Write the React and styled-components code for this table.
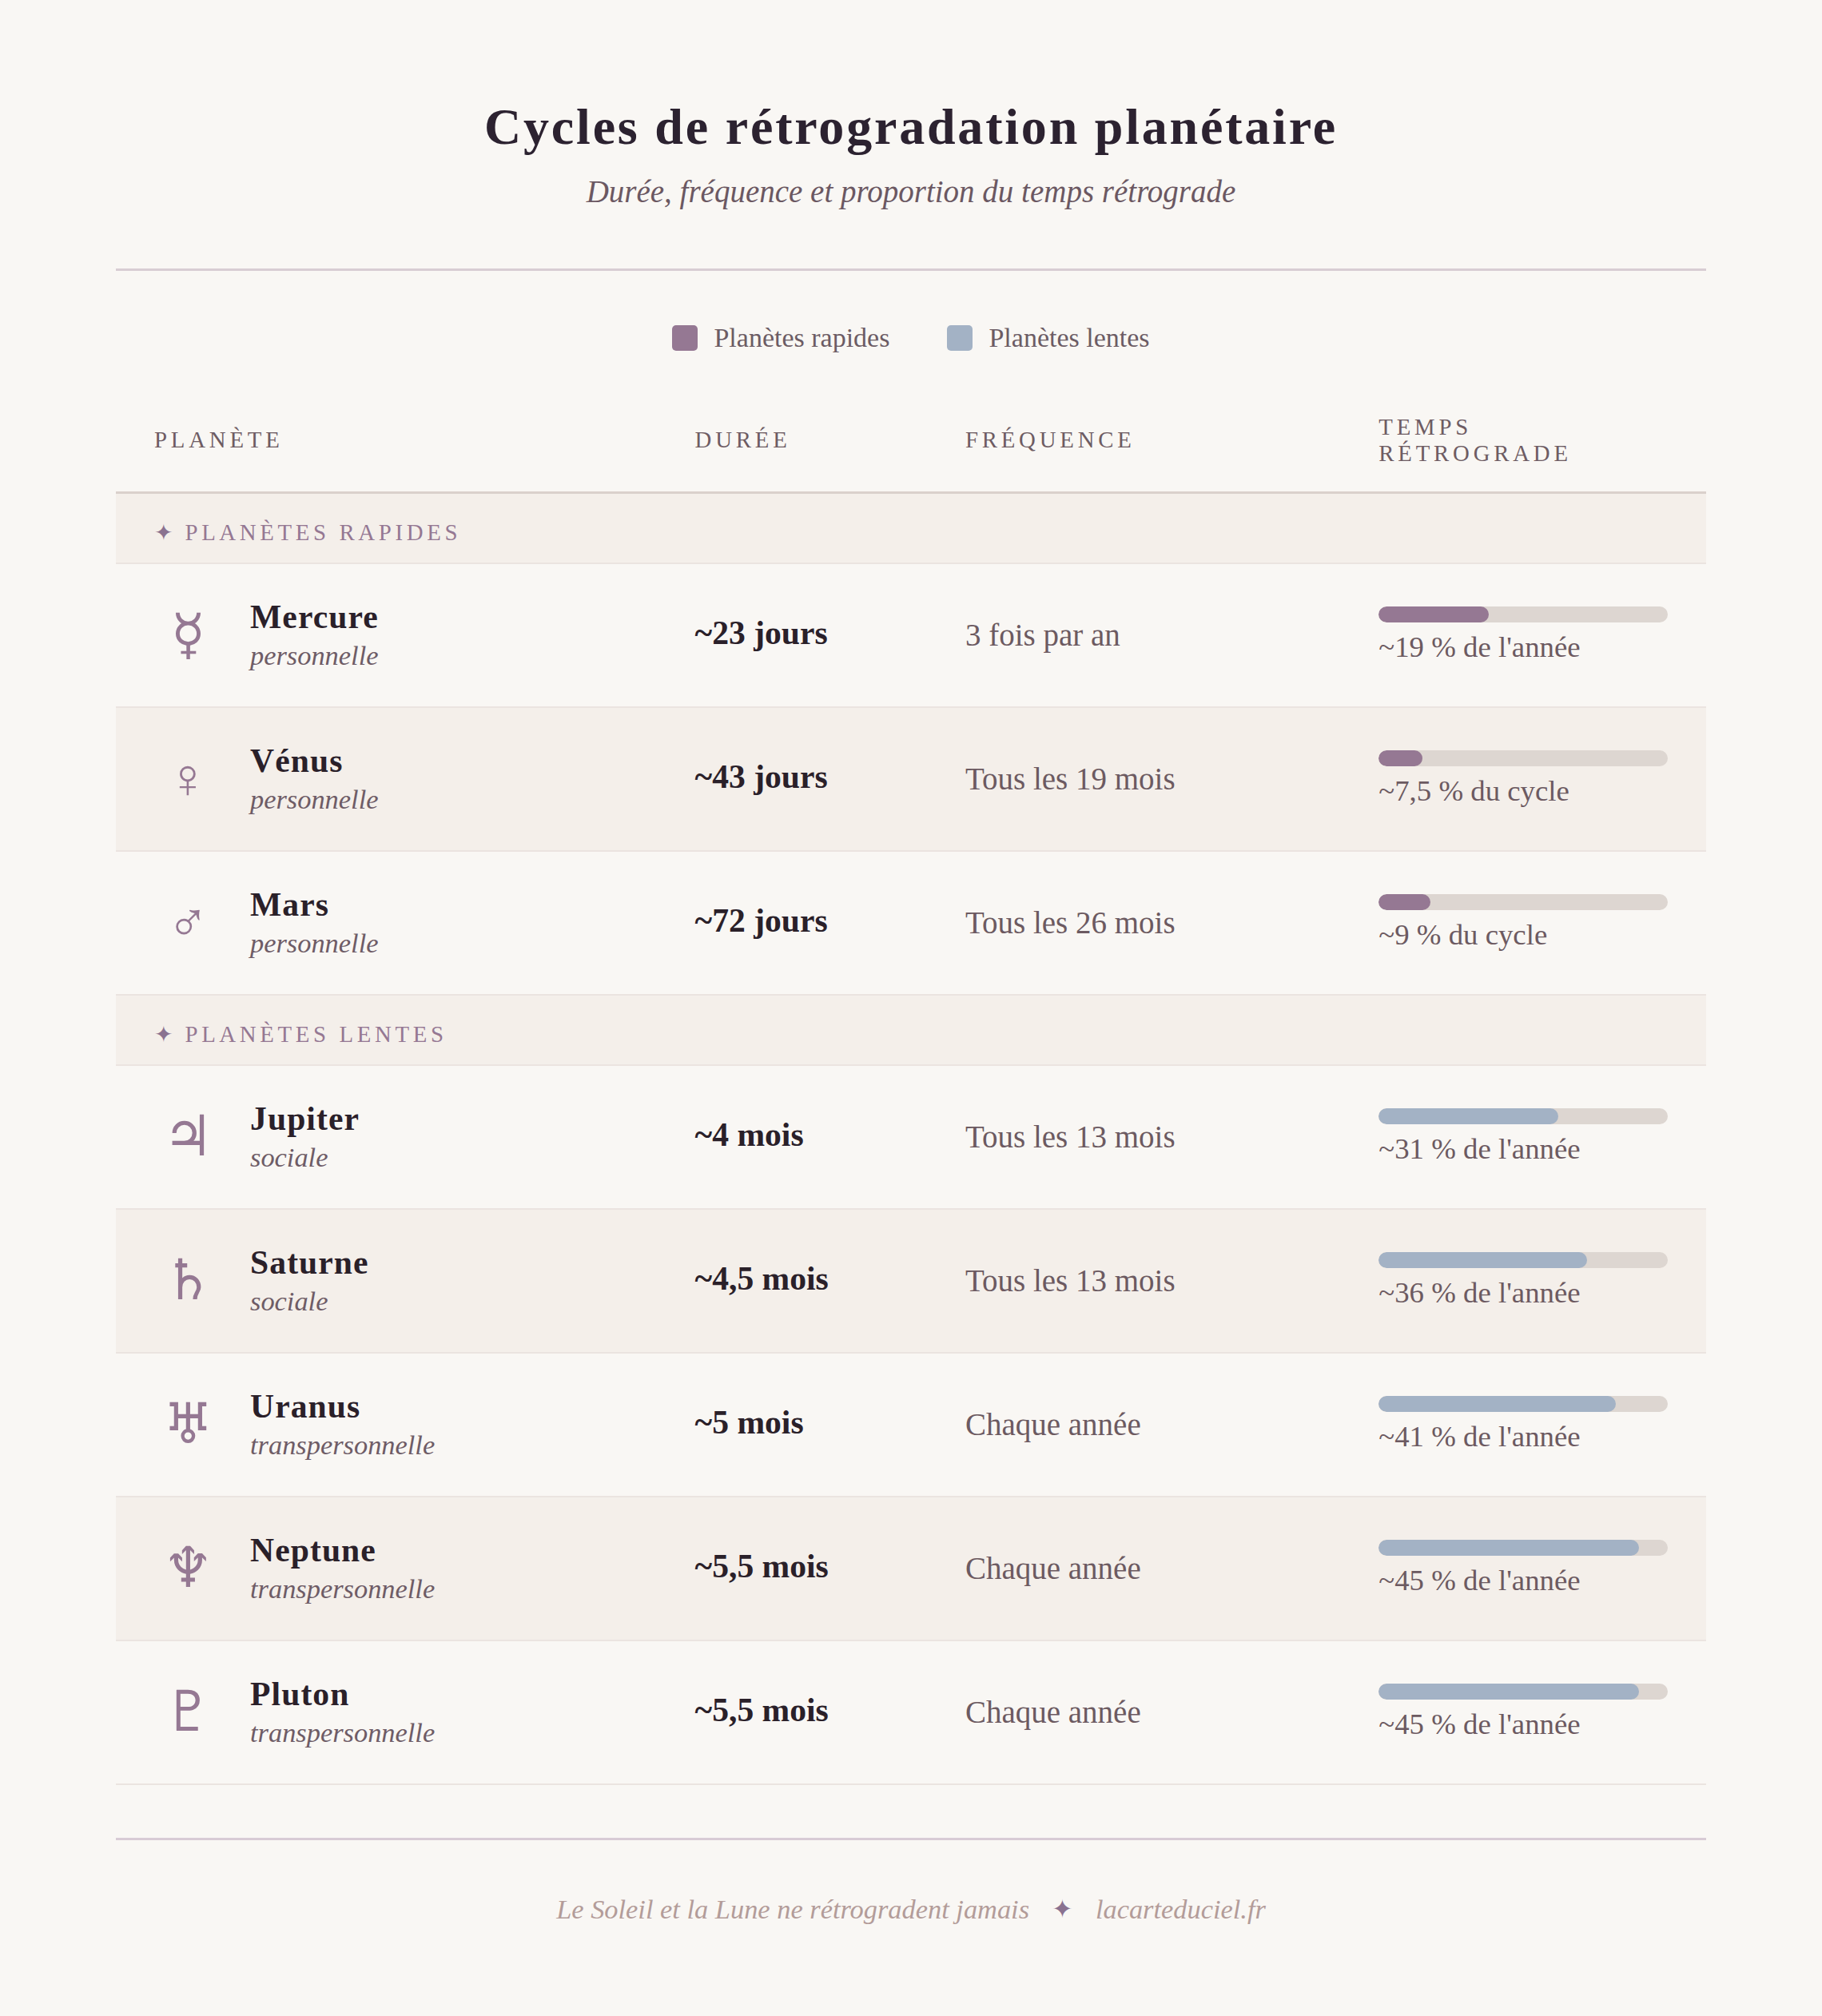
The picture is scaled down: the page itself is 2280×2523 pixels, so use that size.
import React from "react";
import styled, { createGlobalStyle } from "styled-components";

const GlobalStyle = createGlobalStyle`
  html, body {
    margin: 0;
    padding: 0;
    background: #f9f7f4;
  }
  body {
    font-family: "Liberation Serif", "Times New Roman", serif;
    color: #2c2230;
  }
`;

const Page = styled.div`
  max-width: 1990px;
  margin: 0 auto;
  padding: 122px 0 110px;
`;

const Header = styled.header`
  text-align: center;
  padding-bottom: 74px;
  border-bottom: 3px solid #d8cdd3;
`;

const Title = styled.h1`
  margin: 0;
  font-size: 64px;
  line-height: 1.15;
  font-weight: 700;
  letter-spacing: 2.8px;
  color: #2c2230;
`;

const Subtitle = styled.p`
  margin: 22px 0 0;
  font-size: 39px;
  line-height: 1.15;
  font-style: italic;
  color: #6b5862;
`;

const Legend = styled.div`
  display: flex;
  justify-content: center;
  align-items: center;
  gap: 72px;
  margin: 64px 0 42px;
`;

const LegendItem = styled.div`
  display: flex;
  align-items: center;
  gap: 20px;
  font-size: 34px;
  line-height: 1.15;
  color: #6c5c64;
`;

const Swatch = styled.span`
  width: 32px;
  height: 32px;
  border-radius: 5px;
  background: ${({ $color }) => $color};
`;

const cols = "34% 17% 26% 23%";

const HeadRow = styled.div`
  display: grid;
  grid-template-columns: ${cols};
  align-items: center;
  padding: 33px 0 31px;
  border-bottom: 3px solid #dad1cc;
`;

const HeadCell = styled.div`
  padding: 0 48px;
  font-size: 28.8px;
  line-height: 1.15;
  letter-spacing: 4.8px;
  text-transform: uppercase;
  color: #6e5c63;
`;

const SectionRow = styled.div`
  display: flex;
  align-items: center;
  gap: 15px;
  min-height: 88px;
  box-sizing: border-box;
  padding: 12px 48px 0;
  background: #f4efea;
  border-bottom: 2px solid #ebe4e0;
  font-size: 28.8px;
  letter-spacing: 4.65px;
  text-transform: uppercase;
  color: #957893;
`;

const Star = styled.span`
  font-family: "DejaVu Sans", sans-serif;
  font-size: ${({ $size }) => $size || 28}px;
  letter-spacing: 0;
  font-style: normal;
  color: #8a7290;
`;

const Row = styled.div`
  display: grid;
  grid-template-columns: ${cols};
  align-items: center;
  min-height: 178px;
  background: ${({ $alt }) => ($alt ? "#f4efea" : "#f9f7f4")};
  border-bottom: 2px solid #ebe4e0;
`;

const Cell = styled.div`
  padding: 0 48px;
`;

const PlanetCell = styled(Cell)`
  display: flex;
  align-items: center;
`;

const Symbol = styled.span`
  width: 84px;
  margin-right: 36px;
  flex-shrink: 0;
  text-align: center;
  font-size: 70px;
  line-height: 1;
  color: #957893;
`;

const Name = styled.div`
  font-size: 41.6px;
  line-height: 1.15;
  font-weight: 700;
  letter-spacing: 1.1px;
  color: #2a2029;
`;

const Kind = styled.div`
  margin-top: 5px;
  font-size: 34.4px;
  line-height: 1.15;
  font-style: italic;
  color: #6e5c66;
`;

const Duration = styled(Cell)`
  padding-bottom: 4px;
  font-size: 41.6px;
  line-height: 1.15;
  font-weight: 700;
  color: #2a2029;
`;

const Frequency = styled(Cell)`
  padding-top: 2px;
  font-size: 39px;
  line-height: 1.15;
  color: #6c5a61;
`;

const Track = styled.div`
  height: 20px;
  border-radius: 10px;
  background: #ddd6d1;
  overflow: hidden;
`;

const Fill = styled.div`
  height: 100%;
  border-radius: 10px;
  background: ${({ $color }) => $color};
`;

const BarLabel = styled.div`
  margin-top: 10px;
  font-size: 36.8px;
  line-height: 1.15;
  color: #6c5a61;
`;

const Footer = styled.footer`
  margin-top: 66px;
  padding-top: 67px;
  border-top: 3px solid #d8cbd5;
  display: flex;
  justify-content: center;
  align-items: center;
  gap: 28px;
  font-size: 34.4px;
  line-height: 1.15;
  font-style: italic;
  color: #b39c99;
`;

const FAST = "#957893";
const SLOW = "#a3b2c5";

const groups = [
  {
    label: "Planètes rapides",
    color: FAST,
    planets: [
      { sym: "☿", name: "Mercure", kind: "personnelle", dur: "~23 jours", freq: "3 fois par an", pct: 19, label: "~19 % de l'année" },
      { sym: "♀", name: "Vénus", kind: "personnelle", dur: "~43 jours", freq: "Tous les 19 mois", pct: 7.5, label: "~7,5 % du cycle" },
      { sym: "♂", name: "Mars", kind: "personnelle", dur: "~72 jours", freq: "Tous les 26 mois", pct: 9, label: "~9 % du cycle" },
    ],
  },
  {
    label: "Planètes lentes",
    color: SLOW,
    planets: [
      { sym: "♃", name: "Jupiter", kind: "sociale", dur: "~4 mois", freq: "Tous les 13 mois", pct: 31, label: "~31 % de l'année" },
      { sym: "♄", name: "Saturne", kind: "sociale", dur: "~4,5 mois", freq: "Tous les 13 mois", pct: 36, label: "~36 % de l'année" },
      { sym: "♅", name: "Uranus", kind: "transpersonnelle", dur: "~5 mois", freq: "Chaque année", pct: 41, label: "~41 % de l'année" },
      { sym: "♆", name: "Neptune", kind: "transpersonnelle", dur: "~5,5 mois", freq: "Chaque année", pct: 45, label: "~45 % de l'année" },
      { sym: "♇", name: "Pluton", kind: "transpersonnelle", dur: "~5,5 mois", freq: "Chaque année", pct: 45, label: "~45 % de l'année" },
    ],
  },
];

export default function App() {
  return (
    <>
      <GlobalStyle />
      <Page>
        <Header>
          <Title>Cycles de rétrogradation planétaire</Title>
          <Subtitle>Durée, fréquence et proportion du temps rétrograde</Subtitle>
        </Header>

        <Legend>
          <LegendItem>
            <Swatch $color={FAST} />
            Planètes rapides
          </LegendItem>
          <LegendItem>
            <Swatch $color={SLOW} />
            Planètes lentes
          </LegendItem>
        </Legend>

        <HeadRow>
          <HeadCell>Planète</HeadCell>
          <HeadCell>Durée</HeadCell>
          <HeadCell>Fréquence</HeadCell>
          <HeadCell>
            Temps
            <br />
            rétrograde
          </HeadCell>
        </HeadRow>

        {groups.map((group) => (
          <React.Fragment key={group.label}>
            <SectionRow>
              <Star>✦</Star>
              {group.label}
            </SectionRow>
            {group.planets.map((p, i) => (
              <Row key={p.name} $alt={i % 2 === 1}>
                <PlanetCell>
                  <Symbol>{p.sym}</Symbol>
                  <div>
                    <Name>{p.name}</Name>
                    <Kind>{p.kind}</Kind>
                  </div>
                </PlanetCell>
                <Duration>{p.dur}</Duration>
                <Frequency>{p.freq}</Frequency>
                <Cell>
                  <Track>
                    <Fill $color={group.color} style={{ width: `${p.pct * 2}%` }} />
                  </Track>
                  <BarLabel>{p.label}</BarLabel>
                </Cell>
              </Row>
            ))}
          </React.Fragment>
        ))}

        <Footer>
          <span>Le Soleil et la Lune ne rétrogradent jamais</span>
          <Star $size={32}>✦</Star>
          <span>lacarteduciel.fr</span>
        </Footer>
      </Page>
    </>
  );
}
